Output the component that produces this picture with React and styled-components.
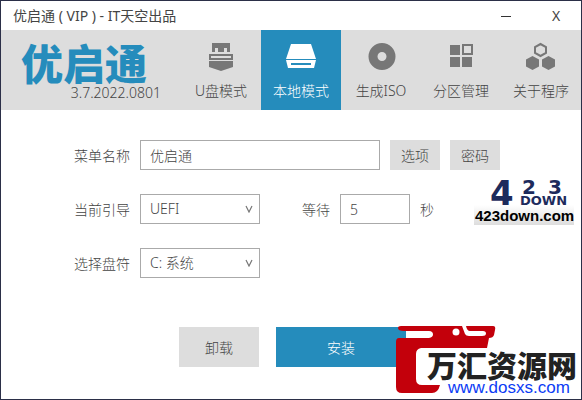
import React, {useState} from 'react';
import styled, {createGlobalStyle} from 'styled-components';

const GlobalStyle = createGlobalStyle`
    * {
        box-sizing: border-box;
    }

    body {
        margin: 0;
        background: white;
        color: #444;
        font-family: "Noto Sans", "Noto Sans CJK SC", sans-serif;
        font-size: 14px;
        line-height: 20px;
    }

    button, input, select {
        font: inherit;
        color: inherit;
    }
`;

const Window = styled.div`
    position: relative;
    display: flex;
    flex-direction: column;
    min-height: 100vh;
    border: 1px solid #2b2f48;
    background: white;
`;

const TitleBar = styled.div`
    display: flex;
    align-items: center;
    justify-content: space-between;
    height: 29px;
    padding-left: 12px;
    color: #444;
`;

const Title = styled.h1`
    margin: 0;
    font-size: 14px;
    font-weight: 400;
    white-space: pre;
`;

const WindowButton = styled.button`
    width: 50px;
    height: 29px;
    padding: 0;
    border: none;
    background: none;
`;

const Header = styled.header`
    display: flex;
    justify-content: space-between;
    height: 80px;
    background: #ddd;
`;

const Brand = styled.div`
    width: 160px;
    padding: 11px 0 0 20px;
`;

const Logo = styled.div`
    color: #258cbc;
    font-family: "Noto Sans CJK SC", sans-serif;
    font-size: 42px;
    font-weight: 900;
    line-height: 42px;
`;

const Version = styled.div`
    font-weight: 300;
    text-align: right;
`;

const Tabs = styled.nav`
    display: flex;
`;

const Tab = styled.button`
    display: flex;
    flex-direction: column;
    align-items: center;
    gap: 9px;
    width: 80px;
    padding: 10px 0 0;
    border: none;
    font-weight: 300;
    white-space: nowrap;
    background: ${props => props.$active ? '#258cbc' : 'transparent'};
    color: ${props => props.$active ? 'white' : '#444'};

    svg {
        display: block;
        color: ${props => props.$active ? 'white' : '#777'};
    }
`;

const Form = styled.form`
    display: flex;
    flex-direction: column;
    gap: 24px;
    padding: 30px 20px 0 73px;
    font-weight: 300;
`;

const Row = styled.div`
    display: flex;
    align-items: center;
    gap: 10px;
`;

const Label = styled.label`
    padding-top: 2px;
    margin-left: ${props => props.$indent ? '32px' : '0'};
`;

const Unit = styled.span`
    padding-top: 2px;
`;

const Field = styled.input`
    width: ${props => props.$wide ? '240px' : '70px'};
    height: 30px;
    padding: 0 9px;
    border: 1px solid #aaa;
    background: white;
`;

const SelectBox = styled.div`
    display: grid;
    align-items: center;
    width: 120px;

    > * {
        grid-area: 1 / 1;
    }

    svg {
        justify-self: end;
        margin-right: 7px;
        pointer-events: none;
    }
`;

const Select = styled.select`
    width: 100%;
    height: 30px;
    padding: 0 9px;
    border: 1px solid #aaa;
    border-radius: 0;
    background: white;
    appearance: none;
`;

const Button = styled.button`
    width: 50px;
    height: 30px;
    padding: 2px 0 0;
    border: none;
    background: #ddd;
    font-weight: 300;
`;

const Actions = styled.div`
    display: flex;
    justify-content: center;
    gap: 17px;
    padding: 25px 0 32px;
    margin-left: -50px;
`;

const ActionButton = styled(Button)`
    width: ${props => props.$primary ? '130px' : '80px'};
    height: 40px;
    background: ${props => props.$primary ? '#258cbc' : '#ddd'};
    color: ${props => props.$primary ? 'white' : '#444'};
`;

const DownBadge = styled.svg`
    position: absolute;
    top: 176px;
    right: 6px;
    overflow: visible;
`;

const SiteBadge = styled.svg`
    position: absolute;
    right: 3px;
    bottom: 1px;
    overflow: visible;
`;

const UsbIcon = () => (
    <svg width="32" height="32" viewBox="0 0 32 32" fill="currentColor">
        <path d="M7 3h18v9h-3V8h-3v4h-6V8h-3v4H7z"/>
        <path fillRule="evenodd" d="M4 14h24v6H4zM6 16v2h20v-2z"/>
        <path d="M4 21h24v6l-12 4-12-4z"/>
    </svg>
);

const DriveIcon = () => (
    <svg width="32" height="32" viewBox="0 0 32 32" fill="currentColor">
        <path d="M6 4h20l5 15H1z"/>
        <path fillRule="evenodd" d="M1 20h30l-2 8H3zM6 23v2h20v-2z"/>
    </svg>
);

const DiscIcon = () => (
    <svg width="32" height="32" viewBox="0 0 32 32" fill="currentColor">
        <path fillRule="evenodd" d="M17 3a13.500 13.500 0 1 0 0 27a13.500 13.500 0 1 0 0-27zM17 12a4.500 4.500 0 1 1 0 9a4.500 4.500 0 1 1 0-9z"/>
    </svg>
);

const BlocksIcon = () => (
    <svg width="32" height="32" viewBox="0 0 32 32" fill="currentColor">
        <path d="M5 5h10v10H5zM5 17h10v10H5zM17 17h10v10H17z"/>
        <path fillRule="evenodd" d="M17 4h11v11H17zM19 6v7h7V6z"/>
    </svg>
);

const HexagonsIcon = () => (
    <svg width="32" height="32" viewBox="0 0 32 32" fill="currentColor">
        <path d="M15.500 4l5.500 3v6l-5.500 3-5.500-3V7z" fill="none" stroke="currentColor" strokeWidth="2"/>
        <path d="M7.500 16l6.500 3.500v7L7.500 30 1 26.500v-7zM23.500 16l6.500 3.500v7L23.500 30 17 26.500v-7z"/>
    </svg>
);

const Chevron = () => (
    <svg width="8" height="8" viewBox="0 0 8 8" fill="none" stroke="#777" strokeWidth="1.200">
        <path d="M1 1l3 6 3-6"/>
    </svg>
);

const tabs = [
    {name: 'U盘模式', icon: <UsbIcon/>},
    {name: '本地模式', icon: <DriveIcon/>},
    {name: '生成ISO', icon: <DiscIcon/>},
    {name: '分区管理', icon: <BlocksIcon/>},
    {name: '关于程序', icon: <HexagonsIcon/>},
];

const App = () => {
    const [active, setActive] = useState(1);

    return (
        <Window>
            <GlobalStyle/>
            <TitleBar>
                <Title>优启通 ( VIP ) - IT天空出品</Title>
                <div>
                    <WindowButton type="button" aria-label="最小化">
                        <svg width="10" height="10" stroke="#333"><path d="M0 5.500h10"/></svg>
                    </WindowButton>
                    <WindowButton type="button" aria-label="关闭">X</WindowButton>
                </div>
            </TitleBar>
            <Header>
                <Brand>
                    <Logo>优启通</Logo>
                    <Version>3.7.2022.0801</Version>
                </Brand>
                <Tabs>
                    {tabs.map((tab, i) => (
                        <Tab key={tab.name} type="button" $active={i === active} onClick={() => setActive(i)}>
                            {tab.icon}
                            {tab.name}
                        </Tab>
                    ))}
                </Tabs>
            </Header>
            <Form onSubmit={e => e.preventDefault()}>
                <Row>
                    <Label htmlFor="menu">菜单名称</Label>
                    <Field id="menu" $wide defaultValue="优启通"/>
                    <Button type="button">选项</Button>
                    <Button type="button">密码</Button>
                </Row>
                <Row>
                    <Label htmlFor="boot">当前引导</Label>
                    <SelectBox>
                        <Select id="boot"><option>UEFI</option></Select>
                        <Chevron/>
                    </SelectBox>
                    <Label htmlFor="wait" $indent>等待</Label>
                    <Field id="wait" defaultValue="5"/>
                    <Unit>秒</Unit>
                </Row>
                <Row>
                    <Label htmlFor="drive">选择盘符</Label>
                    <SelectBox>
                        <Select id="drive"><option>C: 系统</option></Select>
                        <Chevron/>
                    </SelectBox>
                </Row>
                <Actions>
                    <ActionButton type="button">卸载</ActionButton>
                    <ActionButton type="submit" $primary>安装</ActionButton>
                </Actions>
            </Form>
            <DownBadge width="101" height="48" viewBox="0 0 101 48">
                <defs>
                    <linearGradient id="plate" x1="0" y1="0" x2="0" y2="1">
                        <stop offset="0" stopColor="#fff"/>
                        <stop offset="1" stopColor="#ddd"/>
                    </linearGradient>
                </defs>
                <rect y="28" width="100" height="20" fill="url(#plate)"/>
                <g fill="#1d2b5c" fontFamily="DejaVu Sans" fontWeight="700">
                    <text x="16" y="28" fontSize="34">4</text>
                    <text x="48" y="17" fontSize="20">2</text>
                    <text x="74" y="17" fontSize="20">3</text>
                    <text x="46" y="28" fontSize="13">DOWN</text>
                </g>
                <text x="1" y="44" fontSize="15" fontWeight="700" fontFamily="Liberation Sans" fill="#000">423down.com</text>
            </DownBadge>
            <SiteBadge width="183" height="72" viewBox="0 0 183 72">
                <path
                    fill="#c3000b"
                    d="M3 2Q3 0 6 0H67L70 8Q71 10 74 10H87Q91 10 91 7.500Q91 5 88 5H75Q72 5 71 0H98Q101 0 100 4L99 9Q98 12 94 12L92 22H26Q21 23 21 28V53Q21 59 27 59H45Q43 67 37 67H7Q1 67 1 61V16Q1 12 4 12H34Q38 11 38 8.500Q38 5 34 5H9Q3 5 3 2z"
                />
                <circle cx="61" cy="6" r="3.500" fill="white"/>
                <text x="32" y="51" fontSize="30" fontWeight="900" fontFamily="Noto Sans CJK SC" fill="#222">万汇资源网</text>
                <text x="53" y="67" fontSize="17" fontFamily="Liberation Sans" fill="#0b3cf5">www.dosxs.com</text>
            </SiteBadge>
        </Window>
    );
};

export default App;
